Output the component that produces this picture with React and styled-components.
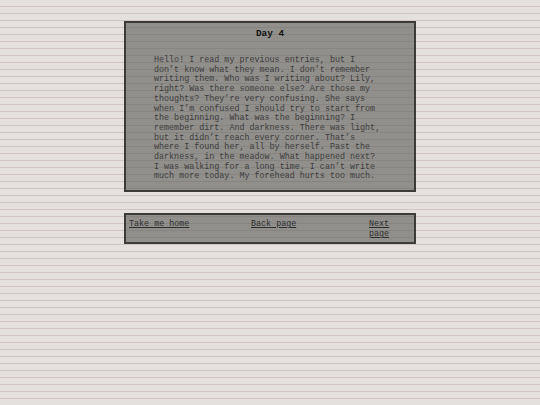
import React from "react";
import styled, { createGlobalStyle } from "styled-components";

const entry =
  "Hello! I read my previous entries, but I don\u2019t know what they mean. I don\u2019t remember writing them. Who was I writing about? Lily, right? Was there someone else? Are those my thoughts? They\u2019re very confusing. She says when I\u2019m confused I should try to start from the beginning. What was the beginning? I remember dirt. And darkness. There was light, but it didn\u2019t reach every corner. That\u2019s where I found her, all by herself. Past the darkness, in the meadow. What happened next? I was walking for a long time. I can\u2019t write much more today. My forehead hurts too much.";

const Global = createGlobalStyle`
  html, body {
    margin: 0;
    padding: 0;
  }
  body {
    min-height: 405px;
    font-family: "Liberation Mono", "Courier New", monospace;
    background-color: #e4e0dd;
    background-image: repeating-linear-gradient(
      to bottom,
      transparent 0,
      transparent 6px,
      #d0c5c4 6px,
      #d0c5c4 7px
    );
  }
`;

const Page = styled.div`
  padding-top: 21px;
  display: flex;
  flex-direction: column;
  align-items: center;
  gap: 21px;
`;

const Panel = styled.div`
  width: 288px;
  box-sizing: content-box;
  border: 2px solid #3c3b3a;
  background: rgba(88, 88, 86, 0.6);
  color: #3d3d3d;
  font-size: 8.4px;
  line-height: 10px;
`;

const Entry = styled(Panel)`
  padding: 6px 0 8px;
`;

const Title = styled.h2`
  margin: 0 0 17px;
  text-align: center;
  font-size: 9.4px;
  font-weight: 700;
  color: #111;
`;

const Body = styled.p`
  margin: 0 auto;
  padding-right: 2px;
  width: 230px;
  line-height: 9.7px;
`;

const Nav = styled(Panel)`
  display: grid;
  grid-template-columns: 122px 118px 24px;
  padding: 4px 0 3px 3px;
  width: 285px;
`;

const NavLink = styled.a`
  color: #2e2e2e;
  text-decoration: underline;
  cursor: pointer;
`;

export default function App() {
  return (
    <>
      <Global />
      <Page>
        <Entry>
          <Title>Day 4</Title>
          <Body>{entry}</Body>
        </Entry>
        <Nav>
          <NavLink>Take me home</NavLink>
          <NavLink>Back page</NavLink>
          <NavLink>Next page</NavLink>
        </Nav>
      </Page>
    </>
  );
}
